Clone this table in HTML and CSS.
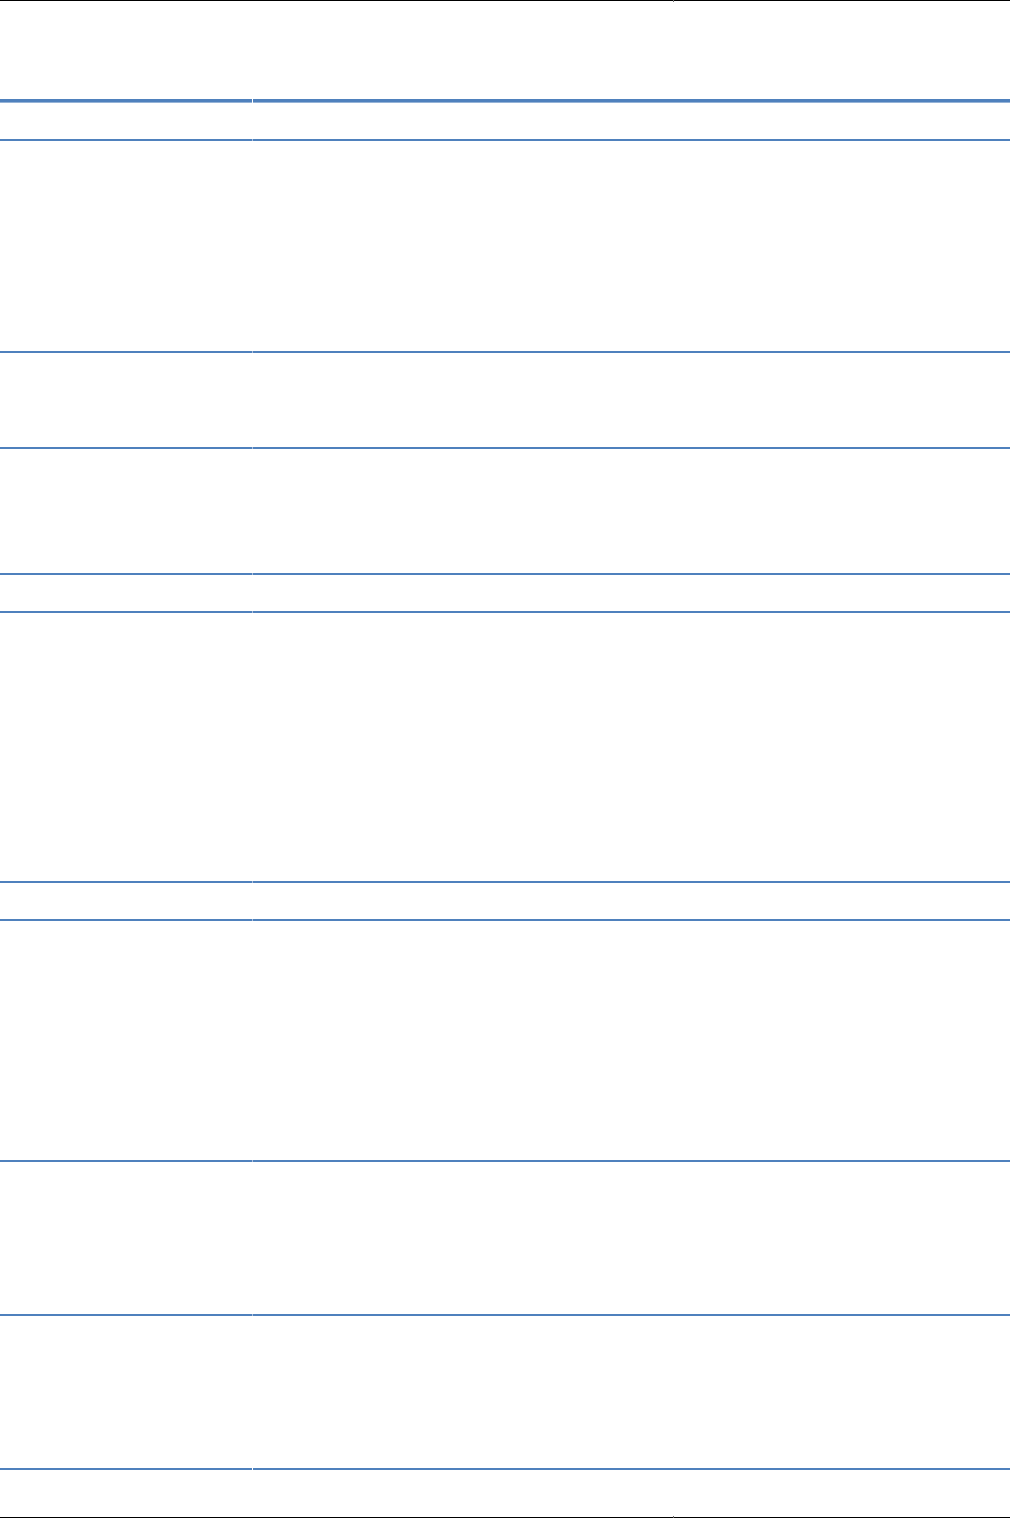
FILE: index.html
```html
<!DOCTYPE html>
<html lang="en">
<head>
<meta charset="utf-8">
<title>Table</title>
<link rel="stylesheet" href="styles.css">
</head>
<body>
<div class="page">
  <div class="pagebar pagebar-top">
    <div class="pb-seg pb-left"></div>
    <div class="pb-tick"></div>
    <div class="pb-seg pb-right"></div>
  </div>
  <div class="spacer"></div>
  <div class="tbl">
    <div class="row row-head r40">
      <div class="cell c1"></div><div class="sep"></div><div class="cell c2"></div>
    </div>
    <div class="row r212">
      <div class="cell c1"></div><div class="sep"></div><div class="cell c2"></div>
    </div>
    <div class="row r96">
      <div class="cell c1"></div><div class="sep"></div><div class="cell c2"></div>
    </div>
    <div class="row r126">
      <div class="cell c1"></div><div class="sep"></div><div class="cell c2"></div>
    </div>
    <div class="row r38">
      <div class="cell c1"></div><div class="sep"></div><div class="cell c2"></div>
    </div>
    <div class="row r270">
      <div class="cell c1"></div><div class="sep"></div><div class="cell c2"></div>
    </div>
    <div class="row r38">
      <div class="cell c1"></div><div class="sep"></div><div class="cell c2"></div>
    </div>
    <div class="row r241">
      <div class="cell c1"></div><div class="sep"></div><div class="cell c2"></div>
    </div>
    <div class="row r154">
      <div class="cell c1"></div><div class="sep"></div><div class="cell c2"></div>
    </div>
    <div class="row r154">
      <div class="cell c1"></div><div class="sep"></div><div class="cell c2"></div>
    </div>
    <div class="row row-last r48">
      <div class="cell c1"></div><div class="sep"></div><div class="cell c2"></div>
    </div>
  </div>
  <div class="pagebar pagebar-bottom">
    <div class="pb-seg pb-left"></div>
    <div class="pb-tick"></div>
    <div class="pb-seg pb-right"></div>
  </div>
</div>
</body>
</html>
```

FILE: styles.css
```css
html, body {
  margin: 0;
  padding: 0;
  background: #ffffff;
  font-family: "Liberation Sans", Arial, sans-serif;
}

.page {
  width: 1010px;
  height: 1518px;
  overflow: hidden;
  display: flex;
  flex-direction: column;
}

.pagebar {
  display: flex;
  width: 100%;
  flex: 0 0 auto;
}

.pagebar-top {
  align-items: flex-start;
  height: 2px;
}

.pagebar-bottom {
  align-items: flex-end;
  height: 2px;
}

.pb-seg {
  height: 1px;
  background: #000000;
}

.pb-left {
  width: 673px;
}

.pb-right {
  flex: 1;
}

.pb-tick {
  width: 1px;
  height: 2px;
  background: #6e6e6e;
}

.spacer {
  height: 97px;
  flex: 0 0 auto;
}

.tbl {
  display: flex;
  flex-direction: column;
  flex: 0 0 auto;
}

.row {
  display: flex;
  flex: 0 0 auto;
}

.cell {
  border-top: 2px solid #4f81bd;
}

.c1 {
  width: 252px;
}

.c2 {
  flex: 1;
}

.sep {
  width: 1px;
  border-top: 2px solid #a9bfdd;
}

.row-head .cell {
  border-top: 3px solid #4f81bd;
  border-bottom: 1px solid #95b3d7;
  align-self: flex-start;
}

.row-head .sep {
  border-top: 3px solid #ffffff;
}

.r38 { height: 38px; }
.r40 { height: 40px; }
.r48 { height: 48px; }
.r96 { height: 96px; }
.r126 { height: 126px; }
.r154 { height: 154px; }
.r212 { height: 212px; }
.r241 { height: 241px; }
.r270 { height: 270px; }

.row-last .sep {
  border-top: 2px solid #ffffff;
}
```
